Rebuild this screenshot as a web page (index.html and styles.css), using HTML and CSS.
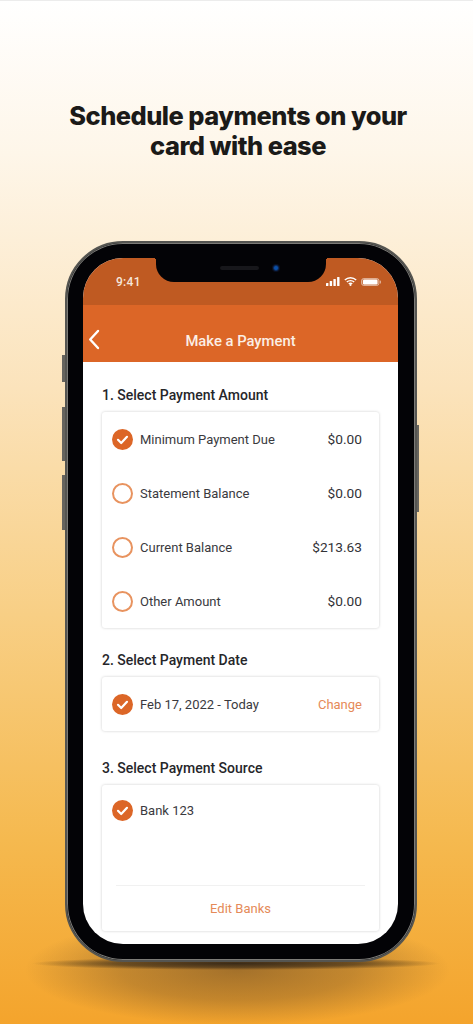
FILE: index.html
```html
<!DOCTYPE html>
<html lang="en">
<head>
  <meta charset="UTF-8" />
  <meta name="viewport" content="width=device-width, initial-scale=1.0" />
  <title>Make a Payment</title>
  <link rel="stylesheet" href="styles.css">
</head>
<body>

<div class="promo">
  <h1 class="promo-title">Schedule payments on your<br>card with ease</h1>

  <div class="floor-shadow"></div>
  <div class="floor-line"></div>

  <div class="phone">
    <span class="side-btn btn-mute"></span>
    <span class="side-btn btn-up"></span>
    <span class="side-btn btn-down"></span>
    <span class="side-btn btn-power"></span>

    <div class="screen">
      <div class="notch">
        <span class="speaker"></span>
        <span class="camera"></span>
      </div>

      <!-- Status bar -->
      <div class="status-bar">
        <span class="time">9:41</span>
        <div class="status-icons">
          <svg width="14" height="9" viewBox="0 0 14 9"><rect x="0" y="6" width="2.4" height="3" rx=".6"/><rect x="3.7" y="4" width="2.4" height="5" rx=".6"/><rect x="7.4" y="2" width="2.4" height="7" rx=".6"/><rect x="11.1" y="0" width="2.4" height="9" rx=".6"/></svg>
          <svg width="13" height="9" viewBox="0 0 13 9"><path d="M.8 3.1a8.2 8.2 0 0 1 11.4 0M2.8 5.1a5.3 5.3 0 0 1 7.4 0M4.8 7a2.4 2.4 0 0 1 3.4 0" fill="none" stroke="#fff" stroke-width="1.4"/><circle cx="6.5" cy="8" r="1"/></svg>
          <svg width="20" height="8" viewBox="0 0 20 8"><rect x=".5" y=".5" width="17.5" height="7" rx="2.2" fill="#fff" fill-opacity=".2" stroke="#fff" stroke-opacity=".45"/><rect x="2" y="1.6" width="14.5" height="4.8" rx="1.2"/><rect x="18.8" y="2.5" width="1.2" height="3" rx=".6" fill-opacity=".5"/></svg>
        </div>
      </div>

      <!-- Header -->
      <div class="app-header">
        <svg class="back" width="12" height="21" viewBox="0 0 12 21"><path d="M10 2 2.2 10.5 10 19" fill="none" stroke="#fff" stroke-width="2.4" stroke-linecap="round" stroke-linejoin="round"/></svg>
        <span>Make a Payment</span>
      </div>

      <div class="content">
        <h2 class="section-title">1. Select Payment Amount</h2>
        <div class="card">
          <div class="row">
            <svg class="check" viewBox="0 0 21 21"><circle cx="10.5" cy="10.5" r="10.5" fill="#dc6627"/><path d="M6 10.8 9.2 14 15 7.8" fill="none" stroke="#fff" stroke-width="2.2" stroke-linecap="round" stroke-linejoin="round"/></svg>
            <span class="label">Minimum Payment Due</span>
            <span class="value">$0.00</span>
          </div>
          <div class="row">
            <span class="radio"></span>
            <span class="label">Statement Balance</span>
            <span class="value">$0.00</span>
          </div>
          <div class="row">
            <span class="radio"></span>
            <span class="label">Current Balance</span>
            <span class="value">$213.63</span>
          </div>
          <div class="row">
            <span class="radio"></span>
            <span class="label">Other Amount</span>
            <span class="value">$0.00</span>
          </div>
        </div>

        <h2 class="section-title">2. Select Payment Date</h2>
        <div class="card card-date">
          <div class="row">
            <svg class="check" viewBox="0 0 21 21"><circle cx="10.5" cy="10.5" r="10.5" fill="#dc6627"/><path d="M6 10.8 9.2 14 15 7.8" fill="none" stroke="#fff" stroke-width="2.2" stroke-linecap="round" stroke-linejoin="round"/></svg>
            <span class="label">Feb 17, 2022 - Today</span>
            <a class="link">Change</a>
          </div>
        </div>

        <h2 class="section-title">3. Select Payment Source</h2>
        <div class="card card-source">
          <div class="row row-bank">
            <svg class="check" viewBox="0 0 21 21"><circle cx="10.5" cy="10.5" r="10.5" fill="#dc6627"/><path d="M6 10.8 9.2 14 15 7.8" fill="none" stroke="#fff" stroke-width="2.2" stroke-linecap="round" stroke-linejoin="round"/></svg>
            <span class="label">Bank 123</span>
          </div>
          <div class="card-footer"><a class="link">Edit Banks</a></div>
        </div>
      </div>
    </div>
  </div>
</div>

</body>
</html>
```

FILE: styles.css
```css
html, body {
  margin: 0;
  padding: 0;
  height: 100%;
  overflow: hidden;
}

.promo {
  position: relative;
  height: 1024px;
  width: 473px;
  overflow: hidden;
  display: flex;
  flex-direction: column;
  align-items: center;
  font-family: Roboto, 'Liberation Sans', sans-serif;
  background: linear-gradient(180deg, #ffffff 0%, #fef6e9 15%, #fbe3bb 38%, #f8cf85 60%, #f5b94f 82%, #f4a42c 100%);
  box-shadow: inset 0 1px 0 #ececec;
}

.promo-title {
  margin: 101px 0 0 3px;
  font-family: Inter, 'Liberation Sans', sans-serif;
  font-size: 25.4px;
  line-height: 30px;
  font-weight: 800;
  letter-spacing: -0.5px;
  text-align: center;
  color: #1b1a18;
}

.floor-shadow {
  position: absolute;
  left: 25px;
  top: 915px;
  width: 425px;
  height: 110px;
  background: radial-gradient(closest-side, rgba(110, 75, 35, 0.6), rgba(110, 75, 35, 0.36) 55%, rgba(110, 75, 35, 0));
}

.floor-line {
  position: absolute;
  left: 32px;
  top: 957px;
  width: 408px;
  height: 13px;
  background: radial-gradient(closest-side, rgba(40, 30, 20, 0.85), rgba(40, 30, 20, 0.55) 60%, rgba(40, 30, 20, 0));
}

.phone {
  position: relative;
  box-sizing: border-box;
  width: 352px;
  height: 721px;
  margin-top: 80px;
  margin-left: 9px;
  padding: 15px 17px 16px 16px;
  background: #030306;
  border-radius: 58px;
  border: 2px solid #555551;
  box-shadow: inset 0 0 0 1px #7c7b77;
}

.side-btn {
  position: absolute;
  width: 3px;
  background: #66645e;
}

.btn-mute { left: -5px; top: 112px; height: 27px; }
.btn-up { left: -5px; top: 164px; height: 54px; }
.btn-down { left: -5px; top: 232px; height: 55px; }
.btn-power { right: -4px; top: 182px; height: 87px; width: 2px; }

.screen {
  position: relative;
  height: 100%;
  border-radius: 40px;
  overflow: hidden;
  background: #ffffff;
}

.notch {
  position: absolute;
  left: 73px;
  top: 0;
  width: 170px;
  height: 24px;
  background: #030306;
  border-radius: 0 0 18px 18px;
}

.notch::before, .notch::after {
  content: "";
  position: absolute;
  top: 0;
  width: 3px;
  height: 3px;
}

.notch::before {
  left: -3px;
  background: radial-gradient(circle at 0 100%, transparent 3px, #030306 3px);
}

.notch::after {
  right: -3px;
  background: radial-gradient(circle at 100% 100%, transparent 3px, #030306 3px);
}

.speaker {
  position: absolute;
  left: 64px;
  top: 8px;
  width: 39px;
  height: 4px;
  border-radius: 2px;
  background: #17171b;
}

.camera {
  position: absolute;
  left: 116px;
  top: 6px;
  width: 8px;
  height: 8px;
  border-radius: 50%;
  background: radial-gradient(circle, #0b4fa8 0 25%, #0a0f20 60%);
}

.status-bar {
  height: 47px;
  padding: 0 17px 0 33px;
  background: #bf5a22;
  display: flex;
  justify-content: space-between;
  align-items: center;
}

.time {
  font-size: 12px;
  font-weight: 500;
  letter-spacing: 0.3px;
  color: #f6e6da;
}

.status-icons {
  display: flex;
  align-items: center;
  gap: 4px;
  fill: #fff;
}

.app-header {
  position: relative;
  box-sizing: border-box;
  height: 57px;
  padding-top: 15px;
  display: flex;
  align-items: center;
  justify-content: center;
  background: #dc6627;
  color: #fbeee5;
  font-size: 14.8px;
  font-weight: 500;
}

.back {
  position: absolute;
  left: 5px;
  top: 24px;
}

.content {
  padding: 25px 19px 0;
}

.section-title {
  margin: 0 0 8px;
  font-size: 14px;
  line-height: 17px;
  font-weight: 500;
  color: #26262a;
}

.card {
  border-radius: 3px;
  background: #fff;
  box-shadow: 0 0 3px rgba(0, 0, 0, 0.2);
  margin-bottom: 24px;
}

.card-date {
  margin-bottom: 29px;
}

.row {
  height: 54px;
  padding: 0 17px 0 10px;
  display: flex;
  align-items: center;
  font-size: 13px;
  color: #3a3a3e;
}

.check, .radio {
  flex: none;
  width: 21px;
  height: 21px;
  margin-right: 7px;
}

.radio {
  box-sizing: border-box;
  border: 2px solid #e8935f;
  border-radius: 50%;
}

.label {
  flex: 1;
}

.value {
  color: #333337;
  font-size: 13.7px;
}

.link {
  color: #e58a58;
}

.card-source {
  height: 146px;
  display: flex;
  flex-direction: column;
}

.row-bank {
  height: 50px;
}

.card-footer {
  margin: auto 14px 0;
  height: 45px;
  display: flex;
  align-items: center;
  justify-content: center;
  border-top: 1px solid #f1f1f1;
  font-size: 13px;
}
```
